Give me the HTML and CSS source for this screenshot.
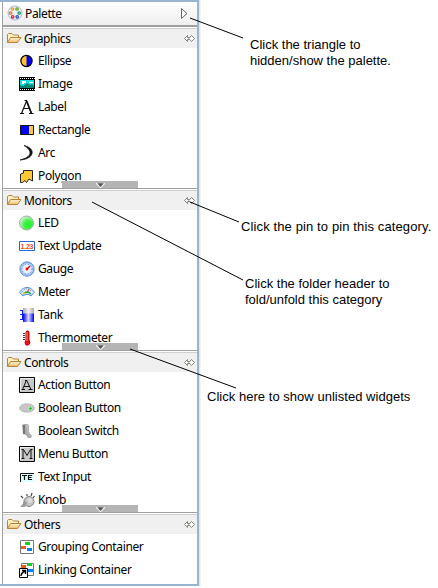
FILE: index.html
```html
<!DOCTYPE html>
<html lang="en">
<head>
<meta charset="utf-8">
<title>Palette</title>
<link rel="stylesheet" href="styles.css">
</head>
<body>
<svg class="defs" width="0" height="0">
  <defs>
    <linearGradient id="fold" x1="0" y1="0" x2="0" y2="1"><stop offset="0" stop-color="#fff6d2"/><stop offset="1" stop-color="#edbd6c"/></linearGradient>
    <radialGradient id="green" cx=".65" cy=".65" r=".7"><stop offset="0" stop-color="#16f51f"/><stop offset=".5" stop-color="#4fee55"/><stop offset="1" stop-color="#d8f8d8"/></radialGradient>
    <radialGradient id="blue"><stop offset="0" stop-color="#fff"/><stop offset=".6" stop-color="#dcecff"/><stop offset="1" stop-color="#78a8e8"/></radialGradient>
    <linearGradient id="metal"><stop offset="0" stop-color="#aaa"/><stop offset=".5" stop-color="#f4f4f4"/><stop offset="1" stop-color="#aaa"/></linearGradient>
    <linearGradient id="water"><stop offset="0" stop-color="#00f"/><stop offset=".5" stop-color="#d8d8ff"/><stop offset="1" stop-color="#00f"/></linearGradient>
    <symbol id="folder" viewBox="0 0 16 16"><path d="M1.5 12.5V4.500L2.500 3.500H6L7.500 5H12.500V7.500" fill="#fff0c4" stroke="#b98239"/><path d="M1.500 12.500L4.500 7.500H15L11.500 12.500Z" fill="url(#fold)" stroke="#b98239"/></symbol>
    <symbol id="pin" viewBox="0 0 11 7"><path d="M3.500 .5L.5 3.500L3.500 6.500V4.500H5.500M3.500 .5V2.500H5.500M7.500 .5L10.500 3.500L7.500 6.500L4.800 3.500Z" fill="#fff" stroke="#77776c" stroke-width=".9"/></symbol>
    <symbol id="more" viewBox="0 0 9 5"><path d="M0 0H9V1L5 5H4L0 1Z" fill="#eee"/><path d="M1.200 .3H7.800L4.500 4Z" fill="#555"/></symbol>
  </defs>
</svg>
<main class="palette">
  <header class="title">
    <svg class="icon" viewBox="0 0 16 16"><circle cx="8" cy="8" r="7" fill="#eef2fa" stroke="#a9bad5"/><g fill="#fff" stroke-width="1.3"><circle cx="5.5" cy="4" r="1.2" stroke="#e9a400"/><circle cx="10" cy="4" r="1.2" stroke="#65a510"/><circle cx="3.6" cy="8" r="1.2" stroke="#ef7412"/><circle cx="12.2" cy="8" r="1.2" stroke="#159b67"/><circle cx="5.7" cy="11.8" r="1.2" stroke="#dc2424"/><circle cx="10.2" cy="11.8" r="1.2" stroke="#304fc9"/></g></svg>
    <span class="name">Palette</span>
    <svg class="triangle" viewBox="0 0 7 11"><path d="M.5 .5L6 5.5L.5 10.5Z" fill="#fff" stroke="#666"/></svg>
  </header>

  <section class="group">
    <h2 class="head"><svg class="icon"><use href="#folder"/></svg><span class="name">Graphics</span><svg class="pin"><use href="#pin"/></svg></h2>
    <ul class="items">
      <li><svg class="icon" viewBox="0 0 16 16"><circle cx="7.5" cy="8" r="5.6" fill="#00f"/><path d="M7.5 2.4A5.6 5.6 0 0 0 7.5 13.6Z" fill="#ffc41e"/><circle cx="7.5" cy="8" r="5.6" fill="none" stroke="#000" stroke-width="1.2"/></svg><span>Ellipse</span></li>
      <li><svg class="icon" viewBox="0 0 16 16"><path d="M0 1H16V15H0Z"/><path d="M1 4H15V12H1Z" fill="#18dce2"/><path d="M1 12V9L4 10L8 7L11 9L13 8L15 10V12Z" fill="#078575"/><path d="M3 5H7V7H5V8H3ZM10 6H14V7H10Z" fill="#fff"/><path d="M1 2.5H16M1 13.5H16" stroke="#fff" stroke-dasharray="1 1"/></svg><span>Image</span></li>
      <li><svg class="icon" viewBox="0 0 16 16"><path d="M2.5 14.5L7.5 2L12.5 14.5M4.8 9.5H10.5M1 14.5H5M10 14.5H14.5M5.5 1.5H8" fill="none" stroke="#111" stroke-width="1.2"/><path d="M7.7 2L12.3 14" stroke="#111" stroke-width="1.6"/></svg><span>Label</span></li>
      <li><svg class="icon" viewBox="0 0 16 16"><path d="M1.5 3.5H14.5V12.5H1.5Z" fill="#00f" stroke="#111"/><path d="M10 4H14V12H10Z" fill="#ffc934"/></svg><span>Rectangle</span></li>
      <li><svg class="icon" viewBox="0 0 16 16"><path d="M5 .5C17 3 16 14 1 15C13 12 14 6 5 .5Z" fill="#111" stroke="#111" stroke-width=".7"/></svg><span>Arc</span></li>
      <li><svg class="icon" viewBox="0 0 16 16"><path d="M1.5 14.5V6L4.5 5V2.5H13.5V13L10 11L7.5 14.5L6 12.5L3.5 14.5Z" fill="#ffc934" stroke="#222"/></svg><span>Polygon</span></li>
    </ul>
    <div class="more"><svg><use href="#more"/></svg></div>
  </section>

  <section class="group">
    <h2 class="head"><svg class="icon"><use href="#folder"/></svg><span class="name">Monitors</span><svg class="pin"><use href="#pin"/></svg></h2>
    <ul class="items">
      <li><svg class="icon" viewBox="0 0 16 16"><circle cx="7.5" cy="8" r="7" fill="url(#green)" stroke="#aaa"/></svg><span>LED</span></li>
      <li><svg class="icon" viewBox="0 0 16 16"><path d="M.5 3.5H15.5V12.5H.5Z" fill="#fff" stroke="#2468df"/><text class="number" x="1.5" y="11" textLength="13">1.23</text></svg><span>Text Update</span></li>
      <li><svg class="icon" viewBox="0 0 16 16"><circle cx="8" cy="8" r="7.2" fill="url(#blue)" stroke="#6d9ad2"/><circle cx="8" cy="8" r="5" fill="none" stroke="#3c79bd" stroke-dasharray="1 2"/><path d="M7 9L11 5" stroke="#e00" stroke-width="1.5"/><circle cx="8" cy="8" r="1.4" fill="#f00"/></svg><span>Gauge</span></li>
      <li><svg class="icon" viewBox="0 0 16 16"><path d="M.5 8Q8-1.5 15.5 8L12 12Q8 8.5 4 12Z" fill="#d9edff" stroke="#518ad3"/><path d="M3 8Q8 1.5 13 8" fill="none" stroke="#397fd0" stroke-dasharray="1 1.5"/><path d="M4 10Q8 6 12 10" fill="none" stroke="#24ad45" stroke-width="1.4"/><path d="M4 10L6 8.6" stroke="#ffc800" stroke-width="1.5"/><path d="M8 9L10 5" stroke="#f02020"/></svg><span>Meter</span></li>
      <li><svg class="icon" viewBox="0 0 16 16"><path d="M4 1H15V7H4Z" fill="url(#metal)"/><path d="M4 6.500H15V15H4Z" fill="url(#water)"/><path d="M1 3.500H4M1 7.500H4M1 12.500H4M3.500 3V13" stroke="#1024e8"/></svg><span>Tank</span></li>
      <li><svg class="icon" viewBox="0 0 16 16"><path d="M7 2Q8.500-.5 10 2V10Q12 13 9.500 15H7Q5 13 7 10Z" fill="#e91818" stroke="#b70000"/><path d="M8 2V11" stroke="#ff8278"/><path d="M4 3.500H6M4 5.500H6M4 7.500H6M4 9.500H6" stroke="#333"/></svg><span>Thermometer</span></li>
    </ul>
    <div class="more"><svg><use href="#more"/></svg></div>
  </section>

  <section class="group">
    <h2 class="head"><svg class="icon"><use href="#folder"/></svg><span class="name">Controls</span><svg class="pin"><use href="#pin"/></svg></h2>
    <ul class="items">
      <li><svg class="icon" viewBox="0 0 16 16"><path d="M.5 .5H15.500V15.500H.5Z" fill="#c8c8c8" stroke="#000"/><path d="M1.500 14V1.500H14" fill="none" stroke="#eee"/><path d="M3.500 12.500L7.500 3L12 12.500M5 9.500H10.500M2.500 12.500H6M9.500 12.500H13.500M6 3.500H8" fill="none" stroke="#111"/></svg><span>Action Button</span></li>
      <li><svg class="icon" viewBox="0 0 16 16"><ellipse cx="8" cy="8" rx="7.500" ry="4.300" fill="#c6c6c6" stroke="#aaa" stroke-width=".6"/><path d="M10 8.500H13M11.500 7V10" stroke="#13d820"/></svg><span>Boolean Button</span></li>
      <li><svg class="icon" viewBox="0 0 16 16"><path d="M3 2L5 1H9L10 3V9L13 13L12 15H9L7 12L4 11Z" fill="#aaa"/><path d="M4 2H6V11H4Z" fill="#777"/><path d="M7 2H9V9L11 13" fill="#ccc" stroke="#bbb"/></svg><span>Boolean Switch</span></li>
      <li><svg class="icon" viewBox="0 0 16 16"><path d="M.5 .5H15.500V15.500H.5Z" fill="#c8c8c8" stroke="#000"/><path d="M1.500 14V1.500H14" fill="none" stroke="#eee"/><path d="M4 12.500V3.500H4.500L8 9.500L11.500 3.500H12V12.500M2.500 12.500H5.500M10.500 12.500H13.500M2.500 3.500H4M12 3.500H13.500" fill="none" stroke="#111"/></svg><span>Menu Button</span></li>
      <li><svg class="icon" viewBox="0 0 16 16"><path d="M1 4H15V13H1Z" fill="#dffcff"/><path d="M1.500 13V4.500H15" fill="none" stroke="#111"/><path d="M3 6.500H8M5.500 6V11M13 6.500H9.500V10.500H13M9.500 8.500H12.500" fill="none" stroke="#111" stroke-width="1.200"/></svg><span>Text Input</span></li>
      <li><svg class="icon" viewBox="0 0 16 16"><path d="M4 6L2 4M8 4V2M12 4L13 1M14 6L15.500 4" stroke="#444" stroke-width="1.200"/><circle cx="10" cy="9.500" r="5" fill="#c4c4c4" stroke="#888"/><circle cx="11" cy="8.500" r="2.500" fill="#ddd"/><path d="M1 15Q4 13 5 8L8 11L6 15Z" fill="#999"/></svg><span>Knob</span></li>
    </ul>
    <div class="more"><svg><use href="#more"/></svg></div>
  </section>

  <section class="group last">
    <h2 class="head"><svg class="icon"><use href="#folder"/></svg><span class="name">Others</span><svg class="pin"><use href="#pin"/></svg></h2>
    <ul class="items">
      <li><svg class="icon" viewBox="0 0 16 16"><path d="M1.500 1.500H14.500V14.500H1.500Z" fill="#fff" stroke="#777"/><path d="M6 3H11V6H6Z" fill="#18cf20"/><path d="M2 7H7V10H2Z" fill="#f65a12"/><path d="M8 9H13V12H8Z" fill="#087cf0"/></svg><span>Grouping Container</span></li>
      <li><svg class="icon" viewBox="0 0 16 16"><path d="M2.500 1.500H14.500V13.500H2.500Z" fill="#fff" stroke="#777"/><path d="M8 1H13V4H8Z" fill="#18cf20"/><path d="M3 3H7V6H3Z" fill="#f65a12"/><path d="M9 7H14V10H9Z" fill="#087cf0"/><path d="M.5 6.500H8.500V15.500H.5Z" fill="#fff" stroke="#000"/><path d="M2 14Q2 11 6 9M3 8.500H6.500V12" fill="none" stroke="#000" stroke-width="1.400"/></svg><span>Linking Container</span></li>
    </ul>
  </section>
</main>

<svg class="leaders" viewBox="0 0 438 588"><path d="M190 18L243 38M190 202L239 222M92 202L243 280M130 349L236 388"/></svg>
<p class="note note-triangle">Click the triangle to<br>hidden/show the palette.</p>
<p class="note note-pin">Click the pin to pin this category.</p>
<p class="note note-folder">Click the folder header to<br>fold/unfold this category</p>
<p class="note note-more">Click here to show unlisted widgets</p>
</body>
</html>
```
FILE: styles.css
```css
* { box-sizing: border-box; }

body {
  position: relative;
  width: 438px;
  height: 588px;
  margin: 0;
  overflow: hidden;
  background: #fff;
  color: #000;
  font-family: "Noto Sans", "Open Sans", sans-serif;
  font-size: 12px;
}

svg { display: block; flex: none; }
.defs { position: absolute; }

.palette {
  width: 199px;
  height: 586px;
  border: solid #99b4d1;
  border-width: 2px 2px 2px 0;
  box-shadow: 1px 0 #e6e6e6, 2px 0 #f3f3f3;
  letter-spacing: -0.37px;
}

.title {
  display: flex;
  align-items: center;
  height: 24px;
  margin-left: 2px;
  padding: 0 9px 1px 4px;
  border-left: 1px solid #a0a0a0;
  border-bottom: 1px solid #a0a0a0;
  background: linear-gradient(#fff, #eee);
}

.icon { width: 16px; height: 16px; }
.name { flex: 1; margin-left: 2px; }
.triangle { width: 7px; height: 11px; }

.group {
  position: relative;
  height: 162px;
  margin-left: 2px;
  border-left: 1px solid #a0a0a0;
  border-top: 1px solid #a0a0a0;
  overflow: hidden;
}
.group.last { height: 72px; }

.head {
  display: flex;
  align-items: center;
  height: 20px;
  margin: 1px 0 0;
  padding: 0 2px 1px 3px;
  border-top: 1px solid #d0d0d0;
  background: #f0f0f0;
  font: inherit;
}
.pin { width: 11px; height: 7px; }

.items { margin: 0; padding: 1px 0 0 16px; list-style: none; }
.items li { display: flex; align-items: center; gap: 3px; height: 23px; white-space: nowrap; }

.number {
  font: bold 7px "Liberation Sans", sans-serif;
  letter-spacing: 0;
  fill: #e84d1c;
}

.more {
  position: absolute;
  left: 59px;
  bottom: 0;
  display: flex;
  justify-content: center;
  width: 76px;
  height: 7px;
  padding-top: 2px;
  background: #b4b4b4;
}
.more svg { width: 9px; height: 5px; }

.leaders {
  position: absolute;
  inset: 0;
  width: 438px;
  height: 588px;
  fill: none;
  stroke: #000;
  stroke-width: 1;
}

.note {
  position: absolute;
  margin: 0;
  font: 13px/16px "Liberation Sans", sans-serif;
  white-space: nowrap;
}
.note-triangle { left: 250px; top: 37px; }
.note-pin { left: 241px; top: 219px; letter-spacing: 0.12px; }
.note-folder { left: 245px; top: 276px; }
.note-more { left: 207px; top: 389px; letter-spacing: 0.03px; }
```
